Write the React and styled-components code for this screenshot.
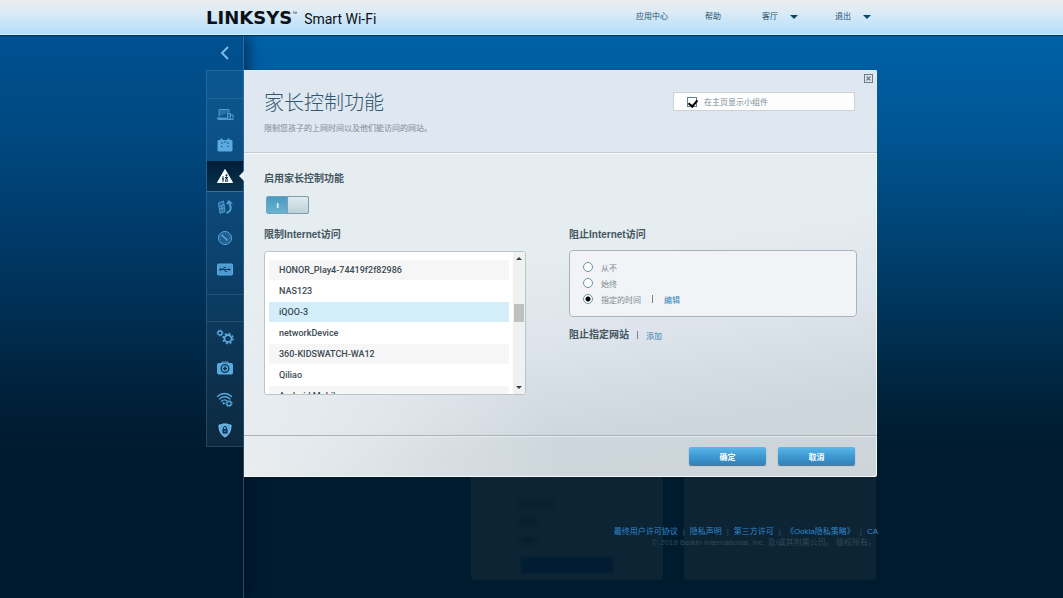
import React, { useEffect, useRef, useState } from "react";
import styled, { createGlobalStyle } from "styled-components";

const GlobalStyle = createGlobalStyle`
  * {
    box-sizing: border-box;
  }
  body {
    margin: 0;
    font-family: "Liberation Sans", "Noto Sans CJK SC", sans-serif;
    font-size: 8px;
    color: #7d8a92;
  }
  button, input {
    font: inherit;
  }
`;

const Page = styled.div`
  min-height: 100vh;
  display: flex;
  flex-direction: column;
  background: #001b2e linear-gradient(#0061a8 34px, #005694 130px, #00406f 250px, #00243d 390px, #001b2e 450px);
`;

const TopBar = styled.header`
  height: 35px;
  background: linear-gradient(#ededee, #dcebf5 12px, #b5dffc 33px);
  border-bottom: 1px solid #cdf0f5;
  box-shadow: 0 1px 1px #003a5e;
  position: relative;
  z-index: 2;
`;

const TopInner = styled.div`
  max-width: 691px;
  height: 34px;
  margin: 0 auto;
  padding-left: 20px;
  display: flex;
  justify-content: space-between;
`;

const Brand = styled.div`
  display: flex;
  align-items: baseline;
  padding-top: 7px;
  color: #0b1016;
  line-height: 22px;
  white-space: nowrap;
`;

const Logo = styled.span`
  font-family: "DejaVu Sans", sans-serif;
  font-weight: bold;
  font-size: 18px;
`;

const Mark = styled.sup`
  font-size: 5px;
  line-height: 5px;
  align-self: flex-start;
  padding-top: 4px;
  margin-right: 7px;
`;

const Product = styled.span`
  font-family: Roboto, sans-serif;
  font-size: 14px;
`;

const Nav = styled.nav`
  display: flex;
  align-items: center;
  padding: 0 6px 3px 0;
  gap: 37px;
`;

const NavLink = styled.a`
  color: #26506e;
  text-decoration: none;
  white-space: nowrap;
`;

const NavMenu = styled.button`
  display: flex;
  align-items: center;
  gap: 12px;
  padding: 0;
  margin-left: ${(p) => (p.$first ? "4px" : "0")};
  border: 0;
  background: none;
  color: #26506e;
  white-space: nowrap;
  &::after {
    content: "";
    margin-top: 3px;
    border: 4px solid transparent;
    border-top-color: #0c4768;
    border-bottom: 0;
  }
`;

const Layout = styled.div`
  flex: 1;
  display: grid;
  grid-template-columns: minmax(0, 1fr) 58px minmax(0, 633px) minmax(0, 1fr);
`;

const Side = styled.aside`
  grid-column: 1 / 3;
  display: flex;
  flex-direction: column;
  align-items: flex-end;
  background: linear-gradient(rgba(0, 15, 50, 0.2), rgba(0, 15, 40, 0.12));
  border-right: 1px solid rgba(120, 165, 195, 0.35);
  box-shadow: 3px 0 14px rgba(0, 10, 30, 0.6);
`;

const Back = styled.button`
  width: 37px;
  height: 35px;
  padding: 0;
  border: 0;
  background: none;
  display: flex;
  align-items: center;
  justify-content: center;
`;

const Menu = styled.ul`
  width: 37px;
  margin: 0;
  padding: 0;
  list-style: none;
  background: rgba(90, 150, 185, 0.13);
  border: solid rgba(120, 175, 210, 0.22);
  border-width: 1px 0 1px 1px;
`;

const Gap = styled.li`
  height: 28px;
  border: solid rgba(120, 175, 210, 0.2);
  border-width: ${(p) => (p.$first ? "0 0 1px" : "1px 0")};
  margin-top: ${(p) => (p.$first ? "0" : "9px")};
`;

const Item = styled.li`
  height: 31px;
  position: relative;
  background: ${(p) => (p.$active ? "linear-gradient(#001c35, #0a3350)" : "none")};
  border-bottom: 1px solid ${(p) => (p.$active ? "#3a7396" : "transparent")};
  ${(p) =>
    p.$active &&
    `&::after {
      content: "";
      position: absolute;
      right: -1px;
      top: 10px;
      border: 5px solid transparent;
      border-right-color: #e7eef1;
      border-left: 0;
    }`}
`;

const ItemLink = styled.a`
  height: 100%;
  display: flex;
  align-items: center;
  justify-content: center;
`;

const Main = styled.main`
  padding-top: 35px;
  position: relative;
  z-index: 1;
`;

const Dialog = styled.section`
  position: relative;
  background: radial-gradient(ellipse at 0% 100%, rgba(255, 255, 255, 0.55), transparent 36%),
    linear-gradient(172deg, #e5edf0 45%, #dde4eb 64%, #cdd6dc 84%, #ced5da);
  border-radius: 0 2px 2px 0;
  box-shadow: inset 0 1px #f6f9fb, inset -1px -1px #f3f7f8;
`;

const Close = styled.button`
  position: absolute;
  top: 4px;
  right: 4px;
  width: 9px;
  height: 9px;
  padding: 0;
  border: 0;
  background: none;
  display: flex;
`;

const Head = styled.header`
  height: 83px;
  padding: 19px 22px 0 20px;
  display: flex;
  justify-content: space-between;
  background: rgba(219, 228, 239, 0.65);
  border-bottom: 1px solid #c3ccd4;
  box-shadow: 0 1px #f7fafb;
`;

const Title = styled.h1`
  margin: 0;
  font-size: 20px;
  line-height: 28px;
  font-weight: 300;
  color: #315771;
`;

const Lead = styled.p`
  margin: 6px 0 0;
  line-height: 12px;
`;

const Widget = styled.label`
  width: 182px;
  height: 19px;
  margin-top: 3px;
  padding-left: 13px;
  display: flex;
  align-items: center;
  gap: 7px;
  background: #fdfdfd;
  border: 1px solid #cdd1d4;
`;

const Check = styled.input`
  appearance: none;
  width: 10px;
  height: 10px;
  margin: 0;
  border: 1px solid #5b8295;
  background: #fff;
  &:checked::after {
    content: "";
    display: block;
    width: 4px;
    height: 7px;
    margin: 0 0 0 2px;
    border: solid #000;
    border-width: 0 2px 2px 0;
    transform: rotate(40deg);
  }
`;

const Body = styled.div`
  padding: 19px 20px 40px;
`;

const Heading = styled.h2`
  margin: 0;
  font-size: 10px;
  line-height: 14px;
  font-weight: bold;
  color: #44565f;
`;

const Switch = styled.button`
  width: 43px;
  height: 18px;
  margin: 10px 0 14px 2px;
  padding: 0;
  display: flex;
  justify-content: space-between;
  align-items: center;
  border: 1px solid #72a6bd;
  border-radius: 2px;
  background: linear-gradient(#479ac0, #6bb3d0);
  color: #fff;
  font-weight: bold;
`;

const SwitchText = styled.span`
  width: 21px;
  text-align: center;
`;

const Knob = styled.span`
  width: 22px;
  height: 18px;
  margin: -1px;
  border: 1px solid #829eab;
  border-radius: 2px;
  background: linear-gradient(#dcebef, #bed2d9);
`;

const Columns = styled.div`
  display: grid;
  grid-template-columns: minmax(0, 262fr) minmax(0, 288fr);
  gap: 43px;
`;

const ListBox = styled.div`
  height: 144px;
  margin-top: 9px;
  display: flex;
  background: #fff;
  border: 1px solid #bcc5cb;
  border-radius: 3px;
  overflow: hidden;
`;

const Devices = styled.ul`
  flex: 1;
  margin: 0;
  padding: 0 4px;
  list-style: none;
  overflow-y: auto;
  scrollbar-width: none;
`;

const Device = styled.button`
  display: block;
  width: 100%;
  height: 21px;
  padding: 0 10px;
  border: solid #fff;
  border-width: 0 0 1px;
  text-align: left;
  font-family: Roboto, "Noto Sans CJK SC", sans-serif;
  font-size: 9px;
  font-weight: 500;
  color: #3c4a53;
  background: ${(p) => (p.$selected ? "#d3eef8" : p.$shaded ? "#f6f6f6" : "#fff")};
`;

const Track = styled.div`
  width: 12px;
  display: flex;
  flex-direction: column;
  align-items: center;
  background: #f1f1f1;
`;

const Arrow = styled.span`
  margin: 5px 0;
  border: 3px solid transparent;
  border-${(p) => (p.$down ? "top" : "bottom")}-color: #3f3f3f;
  border-${(p) => (p.$down ? "bottom" : "top")}: 0;
`;

const Thumb = styled.div`
  width: 10px;
  height: 18px;
  margin: 39px 0 auto;
  background: #c0c0c0;
`;

const Fieldset = styled.fieldset`
  height: 67px;
  margin: 8px 0 0;
  padding: 8px 13px;
  min-width: 0;
  background: #f1f3f6;
  border: 1px solid #a9b3bb;
  border-radius: 4px;
`;

const Option = styled.div`
  height: 16px;
  display: flex;
  align-items: center;
`;

const OptionLabel = styled.label`
  display: flex;
  align-items: center;
  gap: 8px;
`;

const Radio = styled.input`
  appearance: none;
  width: 10px;
  height: 10px;
  margin: 0;
  border: 1px solid #6d93a2;
  border-radius: 50%;
  background: #fff;
  &:checked {
    background: radial-gradient(circle, #000 2px, #fff 3px);
  }
`;

const Bar = styled.span`
  width: 1px;
  height: 8px;
  margin: 0 ${(p) => (p.$wide ? 11 : 8)}px;
  background: #77838b;
`;

const Link = styled.a`
  color: #3583b8;
  text-decoration: none;
`;

const Sites = styled.div`
  display: flex;
  align-items: center;
  margin-top: 11px;
`;

const Foot = styled.footer`
  height: 42px;
  padding: 11px 22px 0;
  display: flex;
  justify-content: flex-end;
  gap: 12px;
  border-top: 1px solid #a9b2ba;
  box-shadow: inset 0 1px #e6ebed;
`;

const Action = styled.button`
  width: 77px;
  height: 18px;
  padding: 0;
  border: 0;
  border-radius: 2px;
  background: linear-gradient(#5ab8ea, #3f9ad3 50%, #3282b8);
  box-shadow: 0 1px 1px #52708a;
  color: #fff;
  font-weight: bold;
`;

const Behind = styled.div`
  position: relative;
`;

const Cards = styled.div`
  display: flex;
  justify-content: flex-end;
  gap: 21px;
  padding-right: 1px;
`;

const Card = styled.div`
  width: 192px;
  height: 103px;
  padding: 24px 50px 7px;
  display: flex;
  flex-direction: column;
  background: #0c2434;
  border-radius: 0 0 4px 4px;
`;

const Faded = styled.span`
  width: ${(p) => p.$width}px;
  height: 6px;
  margin-bottom: 12px;
  background: #061e2e;
  filter: blur(2px);
`;

const FadedButton = styled.span`
  width: 92px;
  height: 16px;
  margin-top: auto;
  background: #021d33;
  filter: blur(1px);
`;

const Legal = styled.footer`
  position: absolute;
  top: 49px;
  right: -1px;
  line-height: 11px;
  white-space: nowrap;
`;

const LegalLinks = styled.div`
  display: flex;
  justify-content: flex-end;
  align-items: center;
  gap: 5px;
`;

const LegalLink = styled.a`
  color: #3187ce;
  text-decoration: none;
  & + &::before {
    content: "|";
    margin-right: 5px;
    color: #31566f;
  }
`;

const Copyright = styled.div`
  text-align: right;
  padding-right: 2px;
  color: #34495a;
`;

const Svg = ({ children, ...rest }) => (
  <svg width="18" height="18" viewBox="0 0 18 18" fill="none" stroke="#5aa9df" {...rest}>
    {children}
  </svg>
);

const DevicesIcon = () => (
  <Svg opacity="0.85">
    <path d="M3 11.500V4.500h10v3" fill="#2f75a8" />
    <path d="M1 13h9.500v1.500H2z" fill="#5aa9df" />
    <rect x="11.500" y="8.500" width="3" height="6" fill="#2f75a8" />
    <rect x="14.500" y="10" width="2.500" height="4.500" />
  </Svg>
);

const GuestIcon = () => (
  <Svg fill="#5aa9df" stroke="none">
    <path d="M2 4h2.500V2.500h2V4h5V2.500h2V4H16l.5 1v9.500l-1 1h-13l-1-1V5z" />
    <path d="M6 6v2M12 6v2M9 5v2M5 10.500h1.500M11 10.500h1.500" stroke="#12598f" />
  </Svg>
);

const ParentalIcon = () => (
  <Svg fill="#fff" stroke="#fff">
    <path d="M9 2.500l7.500 13h-15z" strokeLinejoin="round" />
    <circle cx="10.500" cy="8.300" r="1" fill="#0a2b47" stroke="none" />
    <circle cx="7" cy="10" r=".8" fill="#0a2b47" stroke="none" />
    <path d="M10.500 9.500V12M9.800 11.500V15M11.200 11.500V15M9 10.500h3M7 11v4M6 12h2" stroke="#0a2b47" />
  </Svg>
);

const PriorityIcon = () => (
  <Svg opacity="0.9">
    <path d="M2.500 5l5-2 1.500 10.500-5 1.800z" fill="#2b6896" />
    <path d="M3.500 8l4.500-1.200M4 11l4.500-1.200M5.500 7.500l1 6" />
    <path d="M10.500 15c4.500-1.500 5-5 3.200-9" strokeWidth="2" />
    <path d="M10 6.500L12.500 2l4.500 3.500z" fill="#5aa9df" stroke="none" />
  </Svg>
);

const SpeedIcon = () => (
  <Svg>
    <circle cx="9" cy="9" r="6.500" fill="#1d5b8a" />
    <circle cx="9" cy="9" r="4.500" strokeDasharray="1 2" opacity="0.7" />
    <path d="M5.500 6l4 3.500 2 2" strokeWidth="1.500" />
  </Svg>
);

const UsbIcon = () => (
  <Svg>
    <rect x="1.500" y="4" width="15" height="11" rx="1" fill="#4b9bd1" />
    <path d="M4 9.500h10M6 9.500L8 7.500h2M8 9.500l1.500 2H11" stroke="#0c3a60" />
    <circle cx="4.500" cy="9.500" r="1.200" fill="#0c3a60" stroke="none" />
    <path d="M12.500 8l2.500 1.500-2.500 1.500z" fill="#0c3a60" stroke="none" />
  </Svg>
);

const GearsIcon = () => (
  <Svg>
    <circle cx="4" cy="5" r="2" strokeWidth="1.300" />
    <circle cx="4" cy="5" r="3" strokeDasharray="1.200 1.150" />
    <circle cx="12" cy="10.500" r="3.500" strokeWidth="1.800" />
    <circle cx="12" cy="10.500" r="5" strokeWidth="1.500" strokeDasharray="2 1.930" />
  </Svg>
);

const KitIcon = () => (
  <Svg>
    <path d="M6 5V3h6v2" />
    <rect x="1.500" y="4.500" width="15" height="10.500" rx="1" fill="#5aa9df" />
    <circle cx="9" cy="9.500" r="3.800" stroke="#0c3350" strokeWidth="1.300" />
    <path d="M9 7.500v4M7 9.500h4" stroke="#0c3350" strokeWidth="1.500" />
  </Svg>
);

const WirelessIcon = () => (
  <Svg strokeWidth="1.300">
    <path d="M1.500 6.500c4-4 10-4 14 0M3.500 9c3-3 7.500-3 10.500 0M5.500 11.300c1.500-1.500 3.500-1.800 5-.8" strokeLinecap="round" />
    <path d="M7 12.500l1.500 1.500" strokeWidth="2" />
    <circle cx="13" cy="13.500" r="2.200" />
    <circle cx="13" cy="13.500" r="3.200" strokeWidth=".8" strokeDasharray="1 1" />
  </Svg>
);

const SecurityIcon = () => (
  <Svg>
    <path d="M3 4c2 0 3-.5 4-1h4c1 .5 2 1 4 1 0 5.500-1.500 9.500-6 12-4.500-2.500-6-6.500-6-12z" fill="#5aa9df" stroke="#8cc6eb" />
    <rect x="6.500" y="8" width="5" height="4.500" fill="#0d3553" stroke="none" />
    <path d="M7.500 8.500V7a1.500 1.500 0 0 1 3 0v1.500" stroke="#0d3553" />
    <path d="M9 9.500v1.500" />
  </Svg>
);

const network = [
  ["设备列表", DevicesIcon],
  ["访客访问", GuestIcon],
  ["家长控制功能", ParentalIcon],
  ["媒体优先级", PriorityIcon],
  ["速度测试", SpeedIcon],
  ["外部存储", UsbIcon],
];

const router = [
  ["连接", GearsIcon],
  ["故障排除", KitIcon],
  ["无线", WirelessIcon],
  ["安全", SecurityIcon],
];

const devices = [
  "networkDevice",
  "HONOR_Play4-74419f2f82986",
  "NAS123",
  "iQOO-3",
  "networkDevice",
  "360-KIDSWATCH-WA12",
  "Qiliao",
  "Android Mobile",
];

function MenuItem({ label, icon: Icon, active }) {
  return (
    <Item $active={active}>
      <ItemLink href="#" aria-label={label}>
        <Icon />
      </ItemLink>
    </Item>
  );
}

function DeviceList() {
  const [selected, setSelected] = useState(3);
  const list = useRef(null);

  useEffect(() => {
    list.current.scrollTop = 13;
  }, []);

  return (
    <ListBox>
      <Devices ref={list}>
        {devices.map((name, i) => (
          <li key={i}>
            <Device $selected={i === selected} $shaded={i % 2 === 1} onClick={() => setSelected(i)}>
              {name}
            </Device>
          </li>
        ))}
      </Devices>
      <Track>
        <Arrow />
        <Thumb />
        <Arrow $down />
      </Track>
    </ListBox>
  );
}

function App() {
  const [block, setBlock] = useState("times");
  const [enabled, setEnabled] = useState(true);

  return (
    <>
      <GlobalStyle />
      <Page>
        <TopBar>
          <TopInner>
            <Brand>
              <Logo>LINKSYS</Logo>
              <Mark>™</Mark>
              <Product>Smart Wi-Fi</Product>
            </Brand>
            <Nav>
              <NavLink href="#">应用中心</NavLink>
              <NavLink href="#">帮助</NavLink>
              <NavMenu $first>客厅</NavMenu>
              <NavMenu>退出</NavMenu>
            </Nav>
          </TopInner>
        </TopBar>
        <Layout>
          <Side>
            <Back aria-label="返回">
              <svg width="12" height="16" viewBox="0 0 12 16" fill="none" stroke="#79bce9" strokeWidth="2">
                <path d="M9 2L3 8l6 6" />
              </svg>
            </Back>
            <Menu>
              <Gap $first />
              {network.map(([label, icon], i) => (
                <MenuItem key={label} label={label} icon={icon} active={i === 2} />
              ))}
              <Gap />
              {router.map(([label, icon]) => (
                <MenuItem key={label} label={label} icon={icon} />
              ))}
            </Menu>
          </Side>
          <Main>
            <Dialog>
              <Close aria-label="关闭">
                <svg width="9" height="9" viewBox="0 0 9 9" fill="none" stroke="#6d7d88">
                  <rect x=".5" y=".5" width="8" height="8" />
                  <path d="M2.500 2.500l4 4M6.500 2.500l-4 4" strokeWidth="1.300" />
                </svg>
              </Close>
              <Head>
                <div>
                  <Title>家长控制功能</Title>
                  <Lead>限制您孩子的上网时间以及他们能访问的网站。</Lead>
                </div>
                <Widget>
                  <Check type="checkbox" defaultChecked />
                  在主页显示小组件
                </Widget>
              </Head>
              <Body>
                <Heading>启用家长控制功能</Heading>
                <Switch
                  role="switch"
                  aria-checked={enabled}
                  aria-label="启用家长控制功能"
                  onClick={() => setEnabled(!enabled)}
                >
                  {enabled && <SwitchText>I</SwitchText>}
                  <Knob />
                </Switch>
                <Columns>
                  <div>
                    <Heading>限制Internet访问</Heading>
                    <DeviceList />
                  </div>
                  <div>
                    <Heading>阻止Internet访问</Heading>
                    <Fieldset aria-label="阻止Internet访问">
                      <Option>
                        <OptionLabel>
                          <Radio
                            type="radio"
                            name="block"
                            checked={block === "never"}
                            onChange={() => setBlock("never")}
                          />
                          从不
                        </OptionLabel>
                      </Option>
                      <Option>
                        <OptionLabel>
                          <Radio
                            type="radio"
                            name="block"
                            checked={block === "always"}
                            onChange={() => setBlock("always")}
                          />
                          始终
                        </OptionLabel>
                      </Option>
                      <Option>
                        <OptionLabel>
                          <Radio
                            type="radio"
                            name="block"
                            checked={block === "times"}
                            onChange={() => setBlock("times")}
                          />
                          指定的时间
                        </OptionLabel>
                        <Bar $wide />
                        <Link href="#">编辑</Link>
                      </Option>
                    </Fieldset>
                    <Sites>
                      <Heading>阻止指定网站</Heading>
                      <Bar />
                      <Link href="#">添加</Link>
                    </Sites>
                  </div>
                </Columns>
              </Body>
              <Foot>
                <Action>确定</Action>
                <Action>取消</Action>
              </Foot>
            </Dialog>
            <Behind>
              <Cards>
                <Card>
                  <Faded $width={33} />
                  <Faded $width={14} />
                  <Faded $width={14} />
                  <FadedButton />
                </Card>
                <Card />
              </Cards>
              <Legal>
                <LegalLinks>
                  <LegalLink href="#">最终用户许可协议</LegalLink>
                  <LegalLink href="#">隐私声明</LegalLink>
                  <LegalLink href="#">第三方许可</LegalLink>
                  <LegalLink href="#">《Ookla隐私策略》</LegalLink>
                  <LegalLink href="#">CA</LegalLink>
                </LegalLinks>
                <Copyright>© 2019 Belkin International, Inc. 及/或其附属公司。 版权所有。</Copyright>
              </Legal>
            </Behind>
          </Main>
        </Layout>
      </Page>
    </>
  );
}

export default App;
